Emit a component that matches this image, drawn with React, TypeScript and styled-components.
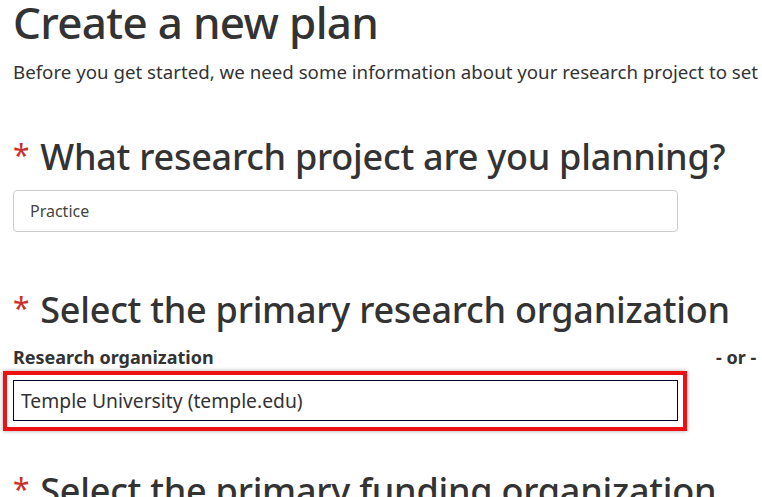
import React from "react";
import styled, { createGlobalStyle } from "styled-components";

const Global = createGlobalStyle`
  html, body { margin: 0; padding: 0; background: #fff; overflow: hidden; }
  body { font-family: "Noto Sans", "Open Sans", Arial, sans-serif; color: #333; }
`;

const Page = styled.div`
  padding: 0 0 0 13px;
  width: 762px;
  box-sizing: border-box;
  height: 497px;
  overflow: hidden;
`;

const Title = styled.h1`
  margin: -1px 0 0;
  font-size: 44px;
  line-height: 46px;
  font-weight: 500;
  letter-spacing: -0.7px;
  color: #333;
`;

const Lead = styled.p`
  margin: 15px 0 0;
  font-size: 18.7px;
  line-height: 24px;
  white-space: nowrap;
`;

const Question = styled.h2<{ $top: number }>`
  margin: ${(p) => p.$top}px 0 0;
  font-size: 36px;
  line-height: 44px;
  font-weight: 500;
  letter-spacing: -0.25px;
  white-space: nowrap;
  color: #333;
`;

const Required = styled.span`
  color: #c9302c;
  font-size: 30px;
  font-weight: 400;
  vertical-align: 4px;
  margin-right: 11px;
`;

const TextInput = styled.div`
  margin-top: 11px;
  width: 665px;
  height: 42px;
  box-sizing: border-box;
  border: 1px solid #ccc;
  border-radius: 4px;
  padding: 0 16px;
  display: flex;
  align-items: center;
  font-size: 16px;
  color: #444;
`;

const LabelRow = styled.div`
  margin-top: 13px;
  display: grid;
  grid-template-columns: 703px 1fr;
  font-size: 18px;
  line-height: 24px;
  font-weight: 700;
  white-space: nowrap;
`;

const Highlight = styled.div`
  margin: 2px 0 0 -10px;
  width: 684px;
  height: 60px;
  box-sizing: border-box;
  border: 4px solid #ee1111;
  padding: 5px 5px 6px 6px;
  box-shadow: 0 0 4px rgba(0, 0, 0, 0.35);
`;

const OrgInput = styled.div`
  height: 41px;
  box-sizing: border-box;
  border: 1px solid #000033;
  padding: 0 7px;
  display: flex;
  align-items: center;
  font-size: 19.3px;
  color: #333;
`;

export default function App() {
  return (
    <>
      <Global />
      <Page>
        <Title>Create a new plan</Title>
        <Lead>
          Before you get started, we need some information about your research project to set you up with the best DMP template for your needs.
        </Lead>
        <Question $top={49}>
          <Required>*</Required>What research project are you planning?
        </Question>
        <TextInput>Practice</TextInput>
        <Question $top={54}>
          <Required>*</Required>Select the primary research organization
        </Question>
        <LabelRow>
          <span>Research organization</span>
          <span>- or -</span>
        </LabelRow>
        <Highlight>
          <OrgInput>Temple University (temple.edu)</OrgInput>
        </Highlight>
        <Question $top={36}>
          <Required>*</Required>Select the primary funding organization
        </Question>
      </Page>
    </>
  );
}
